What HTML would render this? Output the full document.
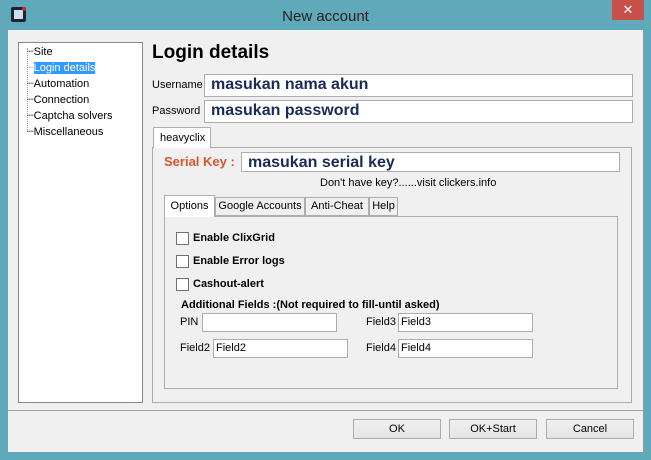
<!DOCTYPE html>
<html><head><style>
*{box-sizing:border-box;margin:0;padding:0}
body{width:651px;height:460px;background:#5fa9ba;font-family:"Liberation Sans",sans-serif;font-size:11px;color:#000;position:relative;overflow:hidden}
.a{position:absolute}
.client{left:8px;top:30px;width:635px;height:422px;background:#f0f0f0}
.inp{position:absolute;background:#fff;border:1px solid #abadb3}
.bold{font-weight:bold}
.btn{position:absolute;top:419px;width:88px;height:20px;border:1px solid #acacac;background:linear-gradient(#f0f0f0,#e5e5e5);text-align:center;line-height:18px;font-size:11px}
.cb{position:absolute;left:176px;width:13px;height:13px;border:1px solid #707070;background:#fff}
.tab{position:absolute;top:197px;height:19px;border:1px solid #adadad;background:#f0f0f0;text-align:center;line-height:17px}
.big{font-weight:bold;font-size:16px;color:#1a2a5a;padding-left:6px;line-height:20px}
</style></head><body>
<div class="a" style="left:11px;top:7px;width:15px;height:15px;background:#223;border-radius:2px"></div>
<div class="a" style="left:14px;top:10px;width:9px;height:9px;background:#cde"></div>
<div class="a" style="left:22px;top:7px;width:4px;height:4px;background:#d22;border-radius:2px"></div>
<div class="a" style="left:0;top:8px;width:651px;text-align:center;font-size:15px;color:#222">New account</div>
<div class="a" style="left:612px;top:0;width:32px;height:20px;background:#c7504a;color:#fff;text-align:center;font-size:13px;line-height:20px">✕</div>
<div class="a client"></div>
<div class="a" style="left:18px;top:42px;width:125px;height:361px;background:#fff;border:1px solid #828790"></div>
<div class="a" style="left:27px;top:48px;width:1px;height:84px;border-left:1px dotted #999"></div>
<div class="a" style="left:27px;top:44px;line-height:16px;font-size:11px">
<div>┈Site</div><div><span style="color:#999">┈</span><span style="background:#3399ff;color:#fff">Login details</span></div><div>┈Automation</div><div>┈Connection</div><div>┈Captcha solvers</div><div>┈Miscellaneous</div></div>
<div class="a bold" style="left:152px;top:42px;font-size:19px">Login details</div>
<div class="a" style="left:152px;top:79px">Username</div>
<div class="inp big" style="left:204px;top:74px;width:429px;height:23px">masukan nama akun</div>
<div class="a" style="left:152px;top:105px">Password</div>
<div class="inp big" style="left:204px;top:100px;width:429px;height:23px">masukan password</div>
<div class="a" style="left:152px;top:147px;width:480px;height:256px;border:1px solid #adadad;background:#f0f0f0"></div>
<div class="a" style="left:153px;top:127px;width:58px;height:21px;border:1px solid #adadad;border-bottom:none;background:#fff;padding:4px 0 0 6px">heavyclix</div>
<div class="a bold" style="left:164px;top:154px;font-size:13px;color:#d9542a">Serial Key :</div>
<div class="inp big" style="left:241px;top:152px;width:379px;height:20px;line-height:19px">masukan serial key</div>
<div class="a" style="left:320px;top:177px">Don't have key?......visit clickers.info</div>
<div class="a" style="left:164px;top:216px;width:454px;height:173px;border:1px solid #adadad;background:#f0f0f0"></div>
<div class="tab" style="left:164px;top:195px;width:51px;height:22px;border-bottom:none;background:#fff;line-height:20px">Options</div>
<div class="tab" style="left:215px;width:90px">Google Accounts</div>
<div class="tab" style="left:305px;width:64px">Anti-Cheat</div>
<div class="tab" style="left:369px;width:29px">Help</div>
<div class="cb" style="top:232px"></div><div class="a bold" style="left:193px;top:232px">Enable ClixGrid</div>
<div class="cb" style="top:255px"></div><div class="a bold" style="left:193px;top:255px">Enable Error logs</div>
<div class="cb" style="top:278px"></div><div class="a bold" style="left:193px;top:278px">Cashout-alert</div>
<div class="a bold" style="left:181px;top:299px">Additional Fields :(Not required to fill-until asked)</div>
<div class="a" style="left:180px;top:316px">PIN</div>
<div class="inp" style="left:202px;top:313px;width:135px;height:19px"></div>
<div class="a" style="left:366px;top:316px">Field3</div>
<div class="inp" style="left:398px;top:313px;width:135px;height:19px;padding:2px 2px">Field3</div>
<div class="a" style="left:180px;top:342px">Field2</div>
<div class="inp" style="left:213px;top:339px;width:135px;height:19px;padding:2px 2px">Field2</div>
<div class="a" style="left:366px;top:342px">Field4</div>
<div class="inp" style="left:398px;top:339px;width:135px;height:19px;padding:2px 2px">Field4</div>
<div class="a" style="left:8px;top:410px;width:635px;height:1px;background:#a0a0a0"></div>
<div class="btn" style="left:353px">OK</div>
<div class="btn" style="left:449px">OK+Start</div>
<div class="btn" style="left:546px">Cancel</div>
</body></html>
